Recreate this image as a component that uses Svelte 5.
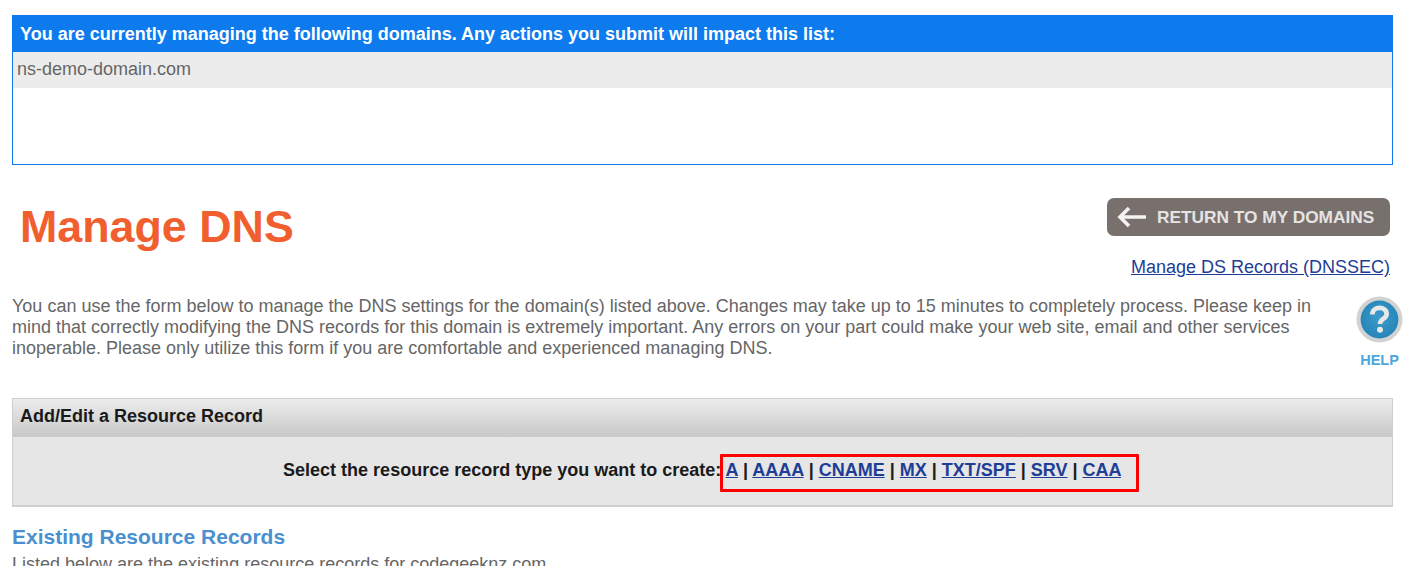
<script>
  const types = ['A', 'AAAA', 'CNAME', 'MX', 'TXT/SPF', 'SRV', 'CAA'];
</script>

<div class="page">
  <section class="managed">
    <h2>You are currently managing the following domains. Any actions you submit will impact this list:</h2>
    <div class="domain">ns-demo-domain.com</div>
  </section>

  <div class="title-row">
    <h1>Manage DNS</h1>
    <div class="actions">
      <div class="return">
        <svg width="30" height="22" viewBox="0 0 30 22"><path d="M12 2 L3 11 L12 20 M3 11 H29" fill="none" stroke="#f4f3f2" stroke-width="3.6"/></svg>
        <span>RETURN TO MY DOMAINS</span>
      </div>
      <a href="#ds">Manage DS Records (DNSSEC)</a>
    </div>
  </div>

  <div class="intro">
    <p>You can use the form below to manage the DNS settings for the domain(s) listed above. Changes may take up to 15 minutes to completely process. Please keep in mind that correctly modifying the DNS records for this domain is extremely important. Any errors on your part could make your web site, email and other services inoperable. Please only utilize this form if you are comfortable and experienced managing DNS.</p>
    <div class="help">
      <svg width="47" height="47" viewBox="0 0 46 46">
        <defs>
          <radialGradient id="g" cx="50%" cy="45%" r="55%"><stop offset="0%" stop-color="#3c9ccc"/><stop offset="100%" stop-color="#2585b8"/></radialGradient>
        </defs>
        <circle cx="23" cy="23" r="22.5" fill="#d2d2d2"/>
        <circle cx="23" cy="23" r="18.5" fill="url(#g)"/>
        <path d="M16 18 C16 9.5 30 9.5 30 17.5 C30 22.5 23.5 22 23.5 27.5" fill="none" stroke="#e8e8e8" stroke-width="4.6"/>
        <circle cx="23.5" cy="33" r="2.9" fill="#e8e8e8"/>
      </svg>
      <span>HELP</span>
    </div>
  </div>

  <section class="panel">
    <h3>Add/Edit a Resource Record</h3>
    <div class="select">
      <span class="lead">Select the resource record type you want to create:</span>
      <span class="links">
        {#each types as t, i}
          <a href="#{t}">{t}</a>{#if i < types.length - 1}{' | '}{/if}
        {/each}
        <span class="mark"></span>
      </span>
    </div>
  </section>

  <h2 class="existing">Existing Resource Records</h2>
  <p class="listed">Listed below are the existing resource records for codegeeknz.com</p>
</div>

<style>
  :global(body) {
    margin: 0;
    background: #fff;
    height: 566px;
    overflow: hidden;
  }
  .page {
    box-sizing: border-box;
    width: 1414px;
    padding: 15px 21px 0 12px;
    font-family: "Liberation Sans", Arial, sans-serif;
    color: #666;
  }
  .managed {
    box-sizing: border-box;
    height: 150px;
    border: 1px solid #0d7bee;
  }
  .managed h2 {
    margin: 0;
    height: 36px;
    padding-left: 7px;
    background: #0d7bee;
    color: #fff;
    font-size: 18px;
    font-weight: bold;
    line-height: 36px;
  }
  .domain {
    height: 36px;
    padding-left: 4px;
    background: #ececec;
    font-size: 18px;
    line-height: 35px;
  }
  .title-row {
    display: flex;
    justify-content: space-between;
    height: 130px;
    padding: 33px 3px 0 8px;
    box-sizing: border-box;
  }
  h1 {
    margin: -1px 0 0;
    color: #f15f2f;
    font-size: 44.8px;
    font-weight: bold;
    line-height: 58px;
  }
  .actions {
    display: flex;
    flex-direction: column;
    align-items: flex-end;
  }
  .return {
    display: flex;
    align-items: center;
    gap: 10px;
    box-sizing: border-box;
    width: 283px;
    height: 38px;
    padding-left: 10px;
    border-radius: 7px;
    background: #78706c;
    color: #e6e4e3;
    font-size: 17.3px;
    font-weight: bold;
    white-space: nowrap;
  }
  .actions a {
    margin-top: 20px;
    color: #1e3d96;
    font-size: 18px;
    line-height: 22px;
  }
  .intro {
    display: flex;
    justify-content: space-between;
    height: 103px;
    margin-right: -10px;
  }
  .intro p {
    width: 1310px;
    margin: 1px 0 0;
    font-size: 18px;
    line-height: 21px;
  }
  .help {
    display: flex;
    flex-direction: column;
    align-items: center;
    width: 47px;
    margin-top: 1px;
    color: #4ba6e0;
    font-size: 14.5px;
    font-weight: bold;
  }
  .help span {
    margin-top: 9px;
  }
  .panel {
    box-sizing: border-box;
    height: 109px;
    border: 1px solid #cfcfcf;
    border-bottom-width: 2px;
    background: #e6e6e6;
  }
  h3 {
    margin: 0;
    height: 38px;
    padding-left: 7px;
    background: linear-gradient(#ececec, #c8c8c8);
    color: #1a1a1a;
    font-size: 18px;
    font-weight: bold;
    line-height: 35px;
  }
  .select {
    padding: 22px 0 0 4px;
    text-align: center;
    color: #1a1a1a;
    font-size: 18px;
    font-weight: bold;
    line-height: 22px;
    white-space: pre-wrap;
  }
  .links {
    position: relative;
  }
  .links a {
    color: #1e3d96;
  }
  .mark {
    position: absolute;
    left: -6px;
    right: -13px;
    top: -6px;
    height: 38px;
    box-sizing: border-box;
    border: 3px solid #f00;
    border-radius: 1px;
  }
  .existing {
    margin: 18px 0 0;
    color: #4a8fd0;
    font-size: 21px;
    font-weight: bold;
    line-height: 24px;
  }
  .listed {
    margin: 5px 0 0;
    font-size: 18px;
    line-height: 21px;
  }
</style>
